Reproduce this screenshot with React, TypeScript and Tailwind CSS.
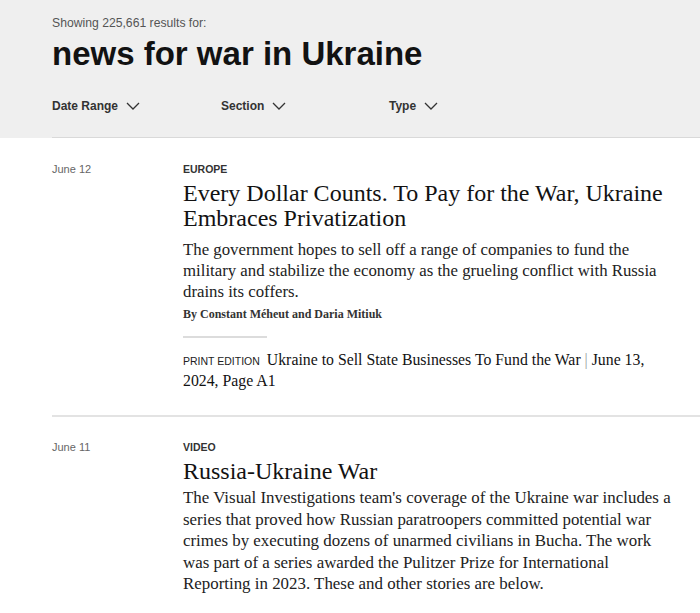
const sans = "font-['Liberation_Sans',Arial,sans-serif]";
const serif = "font-['Liberation_Serif','Times_New_Roman',serif]";

function Chevron() {
  return (
    <svg width="14" height="8" viewBox="0 0 14 8" fill="none" className="ml-2">
      <polyline points="1,1 7,7 13,1" stroke="#333" strokeWidth="1.3" />
    </svg>
  );
}

function FilterButton({ label, width }: { label: string; width: string }) {
  return (
    <button type="button" className={`flex items-center ${width} text-[12px] leading-4 font-bold text-[#333]`}>
      {label}
      <Chevron />
    </button>
  );
}

function SearchHeader() {
  return (
    <header className="bg-[#efefef]">
      <div className="ml-[52px] border-b border-[#d9d9d9] pt-[15px] pb-[23px]">
        <p className={`${sans} text-[12.2px] leading-4 text-[#555]`}>Showing 225,661 results for:</p>
        <h1 className={`${sans} mt-[6px] text-[33px] leading-[33px] font-bold text-[#121212]`}>
          news for war in Ukraine
        </h1>
        <div className={`${sans} mt-[28px] flex`}>
          <FilterButton label="Date Range" width="w-[169px]" />
          <FilterButton label="Section" width="w-[168px]" />
          <FilterButton label="Type" width="w-auto" />
        </div>
      </div>
    </header>
  );
}

type ResultProps = {
  date: string;
  kicker: string;
  children: React.ReactNode;
  pt: string;
};

function ResultRow({ date, kicker, children, pt }: ResultProps) {
  return (
    <li className={`ml-[52px] grid grid-cols-[131px_1fr] border-b-2 border-[#e3e3e3] ${pt} pb-[24px]`}>
      <span className={`${sans} text-[11px] leading-[14px] text-[#666]`}>{date}</span>
      <div>
        <p className={`${sans} text-[10.5px] leading-[14px] font-bold text-[#333]`}>{kicker}</p>
        {children}
      </div>
    </li>
  );
}

export default function App() {
  return (
    <div className="min-h-[613px] bg-white">
      <SearchHeader />
      <ol>
        <ResultRow date="June 12" kicker="EUROPE" pt="pt-[24px]">
          <h2 className={`${serif} mt-[5px] text-[24px] leading-[25px] text-[#121212]`}>
            Every Dollar Counts. To Pay for the War, Ukraine
            <br />
            Embraces Privatization
          </h2>
          <p className={`${serif} mt-[8px] text-[16.8px] leading-[21px] text-[#222]`}>
            The government hopes to sell off a range of companies to fund the
            <br />
            military and stabilize the economy as the grueling conflict with Russia
            <br />
            drains its coffers.
          </p>
          <p className={`${serif} mt-[4px] text-[12px] leading-4 font-bold text-[#333]`}>
            By Constant Méheut and Daria Mitiuk
          </p>
          <div className="mt-[14px] h-[2px] w-[84px] bg-[#dcdcdc]" />
          <p className={`${serif} mt-[12px] text-[15.8px] leading-5 text-[#121212]`}>
            <span className={`${sans} mr-[7px] text-[10.5px] text-[#222]`}>PRINT EDITION</span>
            Ukraine to Sell State Businesses To Fund the War <span className="text-[#999]">|</span> June 13,
            <br />
            2024, Page A1
          </p>
        </ResultRow>
        <ResultRow date="June 11" kicker="VIDEO" pt="pt-[23px]">
          <h2 className={`${serif} mt-[5px] text-[24px] leading-[25px] text-[#121212]`}>Russia-Ukraine War</h2>
          <p className={`${serif} mt-[3px] text-[16.9px] leading-[21.5px] text-[#222]`}>
            The Visual Investigations team's coverage of the Ukraine war includes a
            <br />
            series that proved how Russian paratroopers committed potential war
            <br />
            crimes by executing dozens of unarmed civilians in Bucha. The work
            <br />
            was part of a series awarded the Pulitzer Prize for International
            <br />
            Reporting in 2023. These and other stories are below.
          </p>
        </ResultRow>
      </ol>
    </div>
  );
}
